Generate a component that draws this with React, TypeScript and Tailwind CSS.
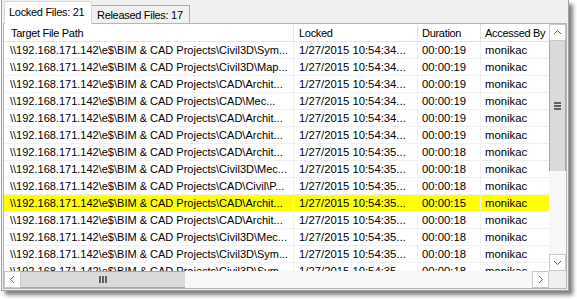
import React from "react";

const rows = [
  ["\\\\192.168.171.142\\e$\\BIM & CAD Projects\\Civil3D\\Sym...", "1/27/2015 10:54:34...", "00:00:19"],
  ["\\\\192.168.171.142\\e$\\BIM & CAD Projects\\Civil3D\\Map...", "1/27/2015 10:54:34...", "00:00:19"],
  ["\\\\192.168.171.142\\e$\\BIM & CAD Projects\\CAD\\Archit...", "1/27/2015 10:54:34...", "00:00:19"],
  ["\\\\192.168.171.142\\e$\\BIM & CAD Projects\\CAD\\Mec...", "1/27/2015 10:54:34...", "00:00:19"],
  ["\\\\192.168.171.142\\e$\\BIM & CAD Projects\\CAD\\Archit...", "1/27/2015 10:54:34...", "00:00:19"],
  ["\\\\192.168.171.142\\e$\\BIM & CAD Projects\\CAD\\Archit...", "1/27/2015 10:54:34...", "00:00:19"],
  ["\\\\192.168.171.142\\e$\\BIM & CAD Projects\\CAD\\Archit...", "1/27/2015 10:54:35...", "00:00:18"],
  ["\\\\192.168.171.142\\e$\\BIM & CAD Projects\\Civil3D\\Mec...", "1/27/2015 10:54:35...", "00:00:18"],
  ["\\\\192.168.171.142\\e$\\BIM & CAD Projects\\CAD\\Civil\\P...", "1/27/2015 10:54:35...", "00:00:18"],
  ["\\\\192.168.171.142\\e$\\BIM & CAD Projects\\CAD\\Archit...", "1/27/2015 10:54:35...", "00:00:15"],
  ["\\\\192.168.171.142\\e$\\BIM & CAD Projects\\CAD\\Archit...", "1/27/2015 10:54:35...", "00:00:18"],
  ["\\\\192.168.171.142\\e$\\BIM & CAD Projects\\Civil3D\\Mec...", "1/27/2015 10:54:35...", "00:00:18"],
  ["\\\\192.168.171.142\\e$\\BIM & CAD Projects\\Civil3D\\Sym...", "1/27/2015 10:54:35...", "00:00:18"],
  ["\\\\192.168.171.142\\e$\\BIM & CAD Projects\\Civil3D\\Sym...", "1/27/2015 10:54:35...", "00:00:18"],
];

const HIGHLIGHT = 9;

function Chevron({ dir }: { dir: "up" | "down" | "left" | "right" }) {
  const pts = {
    up: "1,6 4.5,2.5 8,6",
    down: "1,3 4.5,6.5 8,3",
    left: "6,1 2.5,4.5 6,8",
    right: "3,1 6.5,4.5 3,8",
  }[dir];
  return (
    <svg width="9" height="9" viewBox="0 0 9 9">
      <polyline points={pts} fill="none" stroke="#606060" strokeWidth="1" />
    </svg>
  );
}

export default function App() {
  return (
    <div className="w-[577px] h-[299px] bg-white text-[11px] text-black font-['Liberation_Sans',Arial,sans-serif] leading-none overflow-hidden">
      <div className="ml-px w-[568px] h-[291px] bg-[#f0f0f0] border-x border-b border-[#a0a0a0] shadow-[4px_4px_4px_rgba(0,0,0,0.5)] flex flex-col">
        {/* tabs */}
        <div className="h-[23px] pl-[2px] pt-px flex items-start shrink-0 tracking-[-0.3px]">
          <div className="relative z-10 h-[23px] w-[88px] bg-white border-x border-t border-[#d9d9d9] pl-[4px] pt-[5px]">
            Locked Files: 21
          </div>
          <div className="mt-[4px] h-[19px] w-[98px] bg-[#f0f0f0] border-r border-t border-[#acacac] pl-[5px] pt-[4px]">
            Released Files: 17
          </div>
        </div>

        {/* panel */}
        <div className="ml-px w-[564px] h-[266px] bg-white border border-[#b5b5b5] flex flex-col">
          <div className="flex h-[247px]">
            <div className="w-[545px] overflow-hidden">
              <div className="flex h-[18px] border-b border-[#e5e5e5] tracking-[-0.3px]">
                <div className="w-[290px] border-r border-[#e5e5e5] pl-[7px] pt-[4px]">Target File Path</div>
                <div className="w-[124px] border-r border-[#e5e5e5] pl-[5px] pt-[4px]">Locked</div>
                <div className="w-[63px] border-r border-[#e5e5e5] pl-[4px] pt-[4px]">Duration</div>
                <div className="w-[68px] pl-[4px] pt-[4px]">Accessed By</div>
              </div>
              {rows.map((r, i) => {
                const bg = i === HIGHLIGHT ? "bg-[#ffff00]" : "bg-white";
                return (
                  <div key={i} className="flex h-[17px] border-b border-[#f0f0f0] whitespace-nowrap text-[11.3px]">
                    <div className={`w-[290px] border-r border-[#f0f0f0] pl-[6px] pt-[3px] overflow-hidden text-[11px] ${bg}`}>{r[0]}</div>
                    <div className={`w-[124px] border-r border-[#f0f0f0] pl-[5px] pt-[3px] overflow-hidden ${bg}`}>{r[1]}</div>
                    <div className={`w-[63px] border-r border-[#f0f0f0] pl-[4px] pt-[3px] overflow-hidden ${bg}`}>{r[2]}</div>
                    <div className={`w-[68px] pl-[4px] pt-[3px] overflow-hidden ${bg}`}>monikac</div>
                  </div>
                );
              })}
            </div>
            {/* vertical scrollbar */}
            <div className="w-[17px] flex flex-col bg-[#f7f7f7]">
              <div className="h-[17px] border border-[#c8c8c8] bg-white flex items-center justify-center">
                <Chevron dir="up" />
              </div>
              <div className="flex-1 flex flex-col">
                <div className="h-[130px] bg-[#dadada] border-x border-[#a8a8a8] flex flex-col items-center justify-center gap-px">
                  <div className="w-[7px] h-[2px] bg-[#606060]" />
                  <div className="w-[7px] h-[2px] bg-[#606060]" />
                  <div className="w-[7px] h-[2px] bg-[#606060]" />
                </div>
              </div>
              <div className="h-[17px] border border-[#c8c8c8] bg-white flex items-center justify-center">
                <Chevron dir="down" />
              </div>
            </div>
          </div>
          {/* horizontal scrollbar */}
          <div className="flex h-[17px]">
            <div className="w-[17px] border border-[#c8c8c8] bg-white flex items-center justify-center">
              <Chevron dir="left" />
            </div>
            <div className="flex-1 flex bg-[#f7f7f7]">
              <div className="w-[164px] bg-[#dadada] border-y border-[#a8a8a8] flex items-center justify-center gap-px">
                <div className="w-[2px] h-[7px] bg-[#606060]" />
                <div className="w-[2px] h-[7px] bg-[#606060]" />
                <div className="w-[2px] h-[7px] bg-[#606060]" />
              </div>
            </div>
            <div className="w-[17px] border border-[#c8c8c8] bg-white flex items-center justify-center">
              <Chevron dir="right" />
            </div>
            <div className="w-[17px] bg-[#f0f0f0]" />
          </div>
        </div>
      </div>
    </div>
  );
}
